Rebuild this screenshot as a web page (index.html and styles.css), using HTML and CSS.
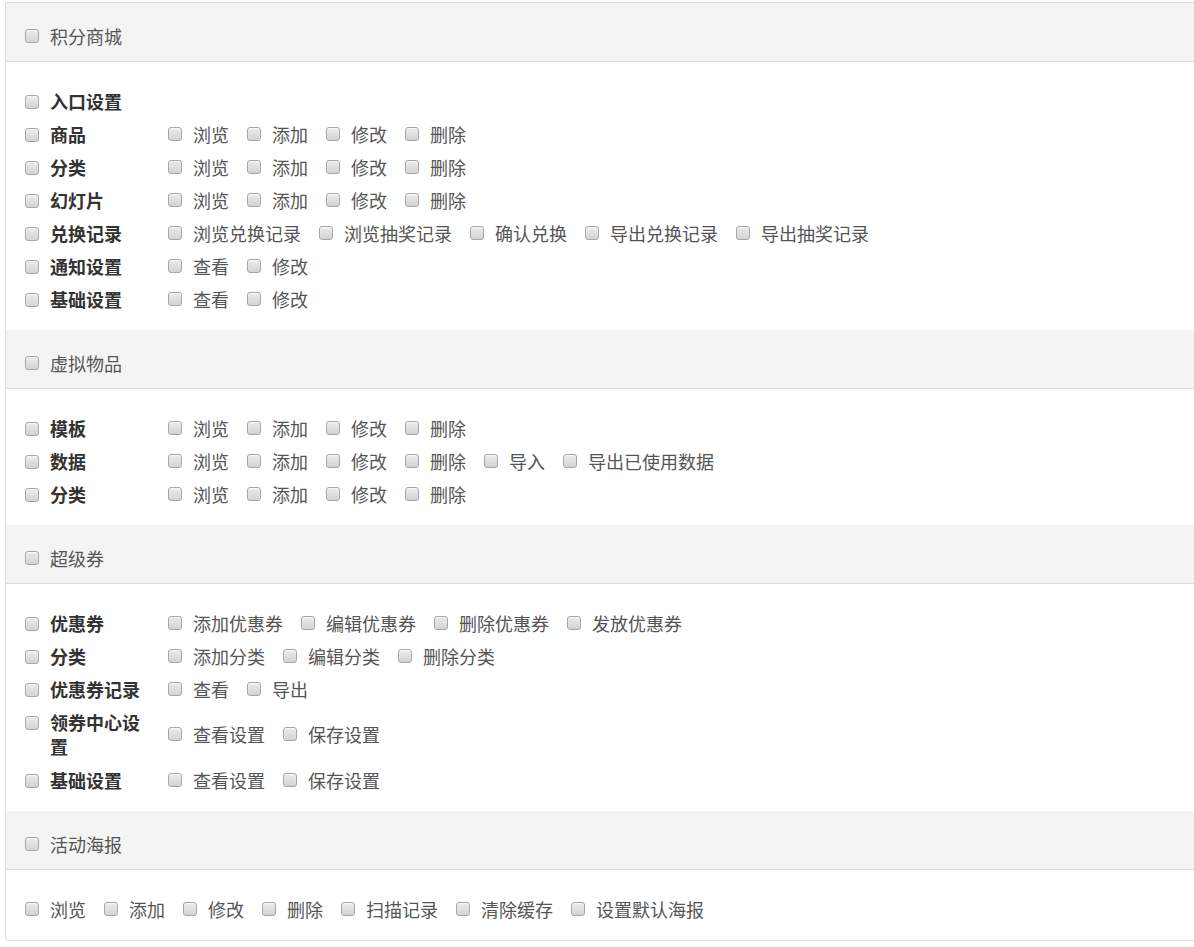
FILE: index.html
```html
<!DOCTYPE html>
<html lang="zh-CN">
<head>
    <meta charset="UTF-8">
    <meta name="viewport" content="width=device-width, initial-scale=1.0">
    <title>权限设置</title>
    <link rel="stylesheet" href="styles.css">
</head>
<body>
    <div class="perm">
        <div class="perm-head">
            <label class="chk"><input type="checkbox"><span>积分商城</span></label>
        </div>
        <div class="perm-body">
            <div class="perm-row">
                <label class="perm-name"><input type="checkbox"><span>入口设置</span></label>
            </div>
            <div class="perm-row">
                <label class="perm-name"><input type="checkbox"><span>商品</span></label>
                <div class="perm-opts">
                    <label class="chk"><input type="checkbox"><span>浏览</span></label>
                    <label class="chk"><input type="checkbox"><span>添加</span></label>
                    <label class="chk"><input type="checkbox"><span>修改</span></label>
                    <label class="chk"><input type="checkbox"><span>删除</span></label>
                </div>
            </div>
            <div class="perm-row">
                <label class="perm-name"><input type="checkbox"><span>分类</span></label>
                <div class="perm-opts">
                    <label class="chk"><input type="checkbox"><span>浏览</span></label>
                    <label class="chk"><input type="checkbox"><span>添加</span></label>
                    <label class="chk"><input type="checkbox"><span>修改</span></label>
                    <label class="chk"><input type="checkbox"><span>删除</span></label>
                </div>
            </div>
            <div class="perm-row">
                <label class="perm-name"><input type="checkbox"><span>幻灯片</span></label>
                <div class="perm-opts">
                    <label class="chk"><input type="checkbox"><span>浏览</span></label>
                    <label class="chk"><input type="checkbox"><span>添加</span></label>
                    <label class="chk"><input type="checkbox"><span>修改</span></label>
                    <label class="chk"><input type="checkbox"><span>删除</span></label>
                </div>
            </div>
            <div class="perm-row">
                <label class="perm-name"><input type="checkbox"><span>兑换记录</span></label>
                <div class="perm-opts">
                    <label class="chk"><input type="checkbox"><span>浏览兑换记录</span></label>
                    <label class="chk"><input type="checkbox"><span>浏览抽奖记录</span></label>
                    <label class="chk"><input type="checkbox"><span>确认兑换</span></label>
                    <label class="chk"><input type="checkbox"><span>导出兑换记录</span></label>
                    <label class="chk"><input type="checkbox"><span>导出抽奖记录</span></label>
                </div>
            </div>
            <div class="perm-row">
                <label class="perm-name"><input type="checkbox"><span>通知设置</span></label>
                <div class="perm-opts">
                    <label class="chk"><input type="checkbox"><span>查看</span></label>
                    <label class="chk"><input type="checkbox"><span>修改</span></label>
                </div>
            </div>
            <div class="perm-row">
                <label class="perm-name"><input type="checkbox"><span>基础设置</span></label>
                <div class="perm-opts">
                    <label class="chk"><input type="checkbox"><span>查看</span></label>
                    <label class="chk"><input type="checkbox"><span>修改</span></label>
                </div>
            </div>
        </div>

        <div class="perm-head">
            <label class="chk"><input type="checkbox"><span>虚拟物品</span></label>
        </div>
        <div class="perm-body">
            <div class="perm-row">
                <label class="perm-name"><input type="checkbox"><span>模板</span></label>
                <div class="perm-opts">
                    <label class="chk"><input type="checkbox"><span>浏览</span></label>
                    <label class="chk"><input type="checkbox"><span>添加</span></label>
                    <label class="chk"><input type="checkbox"><span>修改</span></label>
                    <label class="chk"><input type="checkbox"><span>删除</span></label>
                </div>
            </div>
            <div class="perm-row">
                <label class="perm-name"><input type="checkbox"><span>数据</span></label>
                <div class="perm-opts">
                    <label class="chk"><input type="checkbox"><span>浏览</span></label>
                    <label class="chk"><input type="checkbox"><span>添加</span></label>
                    <label class="chk"><input type="checkbox"><span>修改</span></label>
                    <label class="chk"><input type="checkbox"><span>删除</span></label>
                    <label class="chk"><input type="checkbox"><span>导入</span></label>
                    <label class="chk"><input type="checkbox"><span>导出已使用数据</span></label>
                </div>
            </div>
            <div class="perm-row">
                <label class="perm-name"><input type="checkbox"><span>分类</span></label>
                <div class="perm-opts">
                    <label class="chk"><input type="checkbox"><span>浏览</span></label>
                    <label class="chk"><input type="checkbox"><span>添加</span></label>
                    <label class="chk"><input type="checkbox"><span>修改</span></label>
                    <label class="chk"><input type="checkbox"><span>删除</span></label>
                </div>
            </div>
        </div>

        <div class="perm-head">
            <label class="chk"><input type="checkbox"><span>超级券</span></label>
        </div>
        <div class="perm-body">
            <div class="perm-row">
                <label class="perm-name"><input type="checkbox"><span>优惠券</span></label>
                <div class="perm-opts">
                    <label class="chk"><input type="checkbox"><span>添加优惠券</span></label>
                    <label class="chk"><input type="checkbox"><span>编辑优惠券</span></label>
                    <label class="chk"><input type="checkbox"><span>删除优惠券</span></label>
                    <label class="chk"><input type="checkbox"><span>发放优惠券</span></label>
                </div>
            </div>
            <div class="perm-row">
                <label class="perm-name"><input type="checkbox"><span>分类</span></label>
                <div class="perm-opts">
                    <label class="chk"><input type="checkbox"><span>添加分类</span></label>
                    <label class="chk"><input type="checkbox"><span>编辑分类</span></label>
                    <label class="chk"><input type="checkbox"><span>删除分类</span></label>
                </div>
            </div>
            <div class="perm-row">
                <label class="perm-name"><input type="checkbox"><span>优惠券记录</span></label>
                <div class="perm-opts">
                    <label class="chk"><input type="checkbox"><span>查看</span></label>
                    <label class="chk"><input type="checkbox"><span>导出</span></label>
                </div>
            </div>
            <div class="perm-row perm-row-tall">
                <label class="perm-name"><input type="checkbox"><span>领券中心设置</span></label>
                <div class="perm-opts">
                    <label class="chk"><input type="checkbox"><span>查看设置</span></label>
                    <label class="chk"><input type="checkbox"><span>保存设置</span></label>
                </div>
            </div>
            <div class="perm-row">
                <label class="perm-name"><input type="checkbox"><span>基础设置</span></label>
                <div class="perm-opts">
                    <label class="chk"><input type="checkbox"><span>查看设置</span></label>
                    <label class="chk"><input type="checkbox"><span>保存设置</span></label>
                </div>
            </div>
        </div>

        <div class="perm-head">
            <label class="chk"><input type="checkbox"><span>活动海报</span></label>
        </div>
        <div class="perm-body">
            <div class="perm-row">
                <div class="perm-opts">
                    <label class="chk"><input type="checkbox"><span>浏览</span></label>
                    <label class="chk"><input type="checkbox"><span>添加</span></label>
                    <label class="chk"><input type="checkbox"><span>修改</span></label>
                    <label class="chk"><input type="checkbox"><span>删除</span></label>
                    <label class="chk"><input type="checkbox"><span>扫描记录</span></label>
                    <label class="chk"><input type="checkbox"><span>清除缓存</span></label>
                    <label class="chk"><input type="checkbox"><span>设置默认海报</span></label>
                </div>
            </div>
        </div>
    </div>
</body>
</html>
```

FILE: styles.css
```css
html, body{
    overflow: hidden;
}
body{
    margin: 0;
    background: #fff;
    font-family: "Microsoft YaHei", "Noto Sans CJK SC", sans-serif;
    font-size: 18px;
    line-height: 24px;
    color: #555;
}
input[type="checkbox"]{
    appearance: none;
    -webkit-appearance: none;
    width: 14px;
    height: 14px;
    margin: 0 11px 0 0;
    flex-shrink: 0;
    border: 1px solid #a6a6a6;
    border-radius: 3px;
    background: linear-gradient(to bottom, #ececec, #d3d3d3);
    box-shadow: inset 0 1px 1px #fafafa;
    box-sizing: border-box;
}
.perm{
    width: 1200px;
    margin: 2px 0 0 5px;
    border: 1px solid #ddd;
    border-radius: 0 0 4px 4px;
}
.perm-head{
    background-color: #f4f4f4;
    border-bottom: 1px solid #ddd;
    padding: 21px 19px 13px;
}
.perm-body{
    padding: 27px 19px 19px;
    display: flex;
    flex-direction: column;
    gap: 9px;
}
.perm-row{
    display: flex;
    align-items: center;
}
.perm-row-tall{
    padding-bottom: 1px;
}
.perm-name{
    width: 143px;
    flex-shrink: 0;
    display: flex;
    align-items: flex-start;
    padding-right: 20px;
    box-sizing: border-box;
    font-weight: bold;
    color: #333;
}
.perm-name input[type="checkbox"]{
    margin-top: 6px;
}
.perm-opts{
    display: flex;
    flex-wrap: wrap;
}
.chk{
    display: flex;
    align-items: center;
    margin-right: 18px;
}
```
